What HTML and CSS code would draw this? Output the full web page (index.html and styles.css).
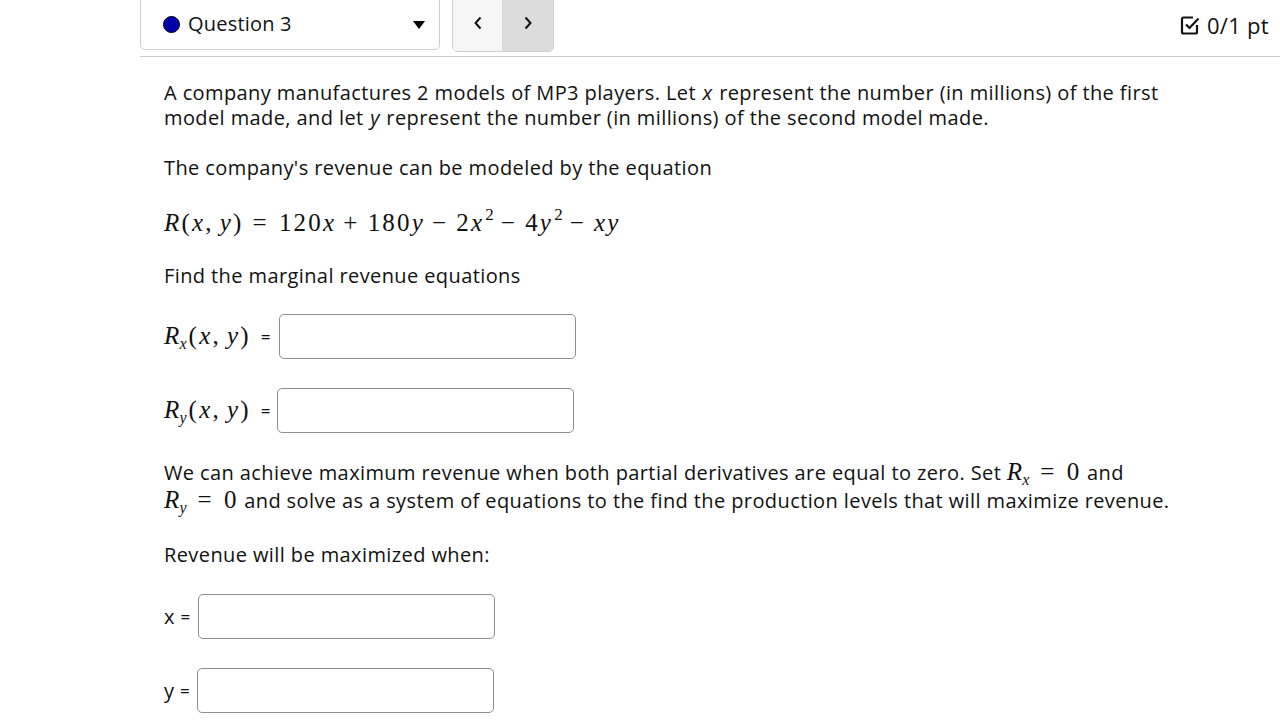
FILE: index.html
```html
<!DOCTYPE html>
<html>
<head>
<meta charset="utf-8">
<link rel="stylesheet" href="styles.css">
</head>
<body>
<div class="page">
  <header class="topbar">
    <div class="qselect">
      <span class="dot"></span>
      <span class="qlabel">Question 3</span>
      <span class="caret"></span>
    </div>
    <div class="navbtns">
      <button class="nav prev"><svg width="14" height="18" viewBox="0 0 14 18"><path d="M9.5 3.5 L4.5 9 L9.5 14.5" fill="none" stroke="#111" stroke-width="2"/></svg></button>
      <button class="nav next"><svg width="14" height="18" viewBox="0 0 14 18"><path d="M4.5 3.5 L9.5 9 L4.5 14.5" fill="none" stroke="#111" stroke-width="2"/></svg></button>
    </div>
    <div class="score">
      <svg width="22" height="22" viewBox="0 0 22 22"><path d="M18 11 V18 a1.5 1.5 0 0 1 -1.5 1.5 H4.5 A1.5 1.5 0 0 1 3 18 V5 a1.5 1.5 0 0 1 1.5 -1.5 H14" fill="none" stroke="#111" stroke-width="2.2"/><path d="M7 10.5 L10.5 14 L19.5 4.5" fill="none" stroke="#111" stroke-width="2.2"/></svg>
      <span>0/1 pt</span>
    </div>
  </header>
  <main class="content">
    <p class="para">A company manufactures 2 models of MP3 players. Let <i class="var">x</i> represent the number (in millions) of the first model made, and let <i class="var">y</i> represent the number (in millions) of the second model made.</p>
    <p class="para">The company's revenue can be modeled by the equation</p>
    <p class="eq"><span class="mi">R</span>(<span class="mi">x</span>,<span class="thin"></span><span class="mi">y</span>)<span class="rel">=</span>120<span class="mi">x</span><span class="bin">+</span>180<span class="mi">y</span><span class="bin">−</span>2<span class="mi">x</span><sup>2</sup><span class="bin">−</span>4<span class="mi">y</span><sup>2</sup><span class="bin">−</span><span class="mi">x</span><span class="mi">y</span></p>
    <p class="para p-find">Find the marginal revenue equations</p>
    <div class="answer-row r1">
      <span class="math"><span class="mi">R</span><sub class="mi">x</sub>(<span class="mi">x</span>,<span class="thin"></span><span class="mi">y</span>)</span><span class="eqsign">=</span>
      <input class="box" type="text">
    </div>
    <div class="answer-row r2">
      <span class="math"><span class="mi">R</span><sub class="mi">y</sub>(<span class="mi">x</span>,<span class="thin"></span><span class="mi">y</span>)</span><span class="eqsign">=</span>
      <input class="box" type="text">
    </div>
    <p class="para p-max">We can achieve maximum revenue when both partial derivatives are equal to zero. Set <span class="math"><span class="mi">R</span><sub class="mi">x</sub><span class="rel">=</span>0</span> and <span class="math"><span class="mi">R</span><sub class="mi">y</sub><span class="rel">=</span>0</span> and solve as a system of equations to the find the production levels that will maximize revenue.</p>
    <p class="para p-rev">Revenue will be maximized when:</p>
    <div class="answer-row r3">
      <span class="plain">x</span><span class="eqsign">=</span>
      <input class="box" type="text">
    </div>
    <div class="answer-row r4">
      <span class="plain">y</span><span class="eqsign">=</span>
      <input class="box" type="text">
    </div>
  </main>
</div>
</body>
</html>
```
FILE: styles.css
```css
html, body { margin: 0; padding: 0; background: #fff; }
body { font-family: "Open Sans", "DejaVu Sans", sans-serif; color: #111; }
.page { margin-left: 140px; }

.topbar {
  display: flex;
  align-items: flex-start;
  height: 57px;
  border-bottom: 1px solid #cbcbcb;
  box-sizing: border-box;
}
.qselect {
  width: 300px;
  height: 51px;
  margin-top: -1px;
  box-sizing: border-box;
  border: 1px solid #cfcfcf;
  border-radius: 0 0 5px 5px;
  display: flex;
  align-items: center;
  padding: 0 14px 0 22px;
  font-size: 20px;
  letter-spacing: 0.2px;
}
.dot {
  width: 17px; height: 17px; border-radius: 50%;
  background: #0000aa; border: 1.5px solid #000; box-sizing: border-box;
  margin-right: 8px;
}
.qlabel { flex: 1; padding-bottom: 3px; }
.caret {
  width: 0; height: 0;
  border-left: 6px solid transparent;
  border-right: 6px solid transparent;
  border-top: 8px solid #000;
}
.navbtns {
  display: flex;
  margin-left: 12px;
  margin-top: -1px;
  height: 51px;
  border: 1px solid #cfcfcf;
  border-radius: 0 0 5px 5px;
  overflow: hidden;
}
.nav {
  width: 50px; height: 100%;
  border: 0; padding: 0 0 6px 0; margin: 0;
  display: flex; align-items: center; justify-content: center;
}
.nav.prev { background: #f6f6f6; border-right: 1px solid #d6d6d6; }
.nav.next { background: #dcdcdc; }
.score {
  margin-left: auto;
  display: flex; align-items: center; gap: 6px;
  height: 50px;
  padding-right: 11px;
  font-size: 22px;
  letter-spacing: 0.3px;
}

.content { padding: 23px 0 0 24px; }
.para {
  margin: 0 0 25px 0;
  font-size: 20px;
  line-height: 25px;
  letter-spacing: 0.4px;
  width: 1008px;
}
.var { padding: 0 1px 0 1px; }
.mi { font-family: "Liberation Serif", serif; font-style: italic; }
.thin { display: inline-block; width: 6px; }
.rel { display: inline-block; margin: 0 10px 0 9px; font-family: "Liberation Serif", serif; }
.bin { display: inline-block; margin: 0 8px 0 7px; font-family: "Liberation Serif", serif; }
.eq {
  margin: 0 0 22px 0;
  font-family: "Liberation Serif", serif;
  font-size: 25px;
  line-height: 36px;
  letter-spacing: 2.2px;
}
.eq sup { font-size: 17px; vertical-align: 11px; line-height: 0; letter-spacing: 0; margin-left: 1px; }
.math { font-family: "Liberation Serif", serif; font-size: 25px; letter-spacing: 2.2px; white-space: nowrap; }
.math sub { font-size: 16px; vertical-align: -5px; line-height: 0; letter-spacing: 0; margin-left: -2px; margin-right: 2px; }
.answer-row {
  display: flex; align-items: center;
  height: 46px;
  margin-bottom: 28px;
}
.eqsign { font-size: 17px; margin: 0 9px 0 10px; letter-spacing: 0; }
.r2 .eqsign { margin-right: 7px; }
.r3 .eqsign, .r4 .eqsign { margin: 0 8px 0 6px; }
.r4 .eqsign { margin-right: 7px; }
.plain { font-size: 20px; }
.box {
  width: 297px; height: 45px;
  box-sizing: border-box;
  border: 1px solid #8f8f8f;
  border-radius: 5px;
  background: #fff;
}
.r1 { margin-top: 12px; }
.r2 { margin-bottom: 25px; }
.p-max { margin-top: 0; margin-bottom: 28px; line-height: 27px; }
.p-rev { margin-bottom: 26px; }
```
